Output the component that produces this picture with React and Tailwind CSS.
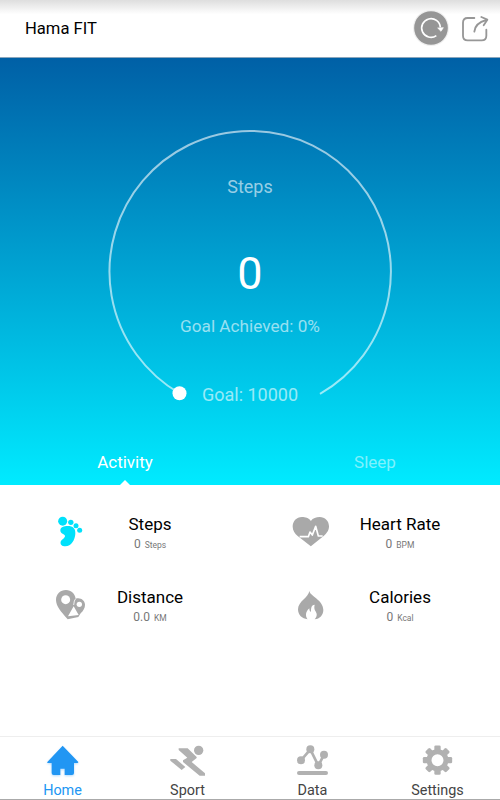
import React, { useState } from 'react';
import clsx from 'clsx';

const RefreshIcon = () => (
  <svg className="h-9 w-9" viewBox="0 0 108 108" fill="none">
    <circle cx="54" cy="54" r="54" fill="#efefef" />
    <circle cx="54" cy="54" r="50.5" fill="#969696" />
    <path d="M70 77 A28 28 0 1 1 82 52" stroke="#fff" strokeWidth="5" />
    <path d="M74 54 L91 53 L84 64 Z" fill="#fff" stroke="#fff" strokeWidth="2" />
  </svg>
);

const ShareIcon = () => (
  <svg
    className="h-7 w-7"
    viewBox="0 0 84 84"
    fill="none"
    stroke="#979797"
    strokeWidth="5.500"
    strokeLinecap="round"
    strokeLinejoin="round"
  >
    <path d="M40 9 H20 Q6 9 6 23 V62 Q6 76 20 76 H62 Q76 76 76 62 V44" />
    <path d="M40 50 C41 34 51 22 76 15" />
    <path d="M61 6 L79 14 L68 31" />
  </svg>
);

const FootIcon = () => (
  <svg className="mr-0.5 h-[31px] w-7" viewBox="0 0 84 93" fill="#00e1fb">
    <circle cx="23" cy="15.500" r="13.500" />
    <circle cx="47.500" cy="19" r="8" />
    <circle cx="63" cy="29" r="7.500" />
    <circle cx="74" cy="43" r="7.500" />
    <path d="M16 43 C16 33 27 30 38 30 C54 30 62 38 61 53 C60 71 49 91 31 91 C21 91 15 85 17 77 C19 71 30 67 30 60 C30 54 16 54 16 43 Z" />
  </svg>
);

const HeartIcon = () => (
  <svg className="h-[31px] w-[37px]" viewBox="0 0 111 93" fill="none">
    <path
      d="M56.500 15 C50 5 40 3 30 3 C13 3 2 16 2 32 C2 44 9 53 17 60 L56.500 91 L95 60 C104 52 111 44 111 31 C111 15 99 3 83 3 C72 3 63 6 56.500 15 Z"
      fill="#a9a9a9"
    />
    <path d="M23 62 H49 L54 48 L61 57 L71 31 L79 60 H92" stroke="#fff" strokeWidth="5" strokeLinejoin="round" />
  </svg>
);

const PinsIcon = () => (
  <svg className="h-[31px] w-[31px]" viewBox="0 0 93 93">
    <path
      fill="#a9a9a9"
      d="M33 3 C49 3 60 14 62 29 C76 24 90 34 90 47 C90 57 85 65 77 73 L70 84 L38 91 L34 86 C20 70 3 52 3 33 C3 15 16 3 33 3 Z"
    />
    <circle cx="32" cy="32" r="13.500" fill="#fff" />
    <circle cx="73" cy="46" r="8" fill="#fff" />
    <path d="M56 52 L71 78 L52 80 L39 82 Z" fill="#fff" />
    <path d="M62 29 L58 36 L56 48" fill="none" stroke="#fff" strokeWidth="2.500" />
  </svg>
);

const FlameIcon = () => (
  <svg className="h-[30px] w-[27px]" viewBox="0 0 81 90" fill="#a9a9a9">
    <path d="M37 2 C38 18 79 29 79 60 C79 75 68 87 53 88 C63 77 59 69 55 63 C52 58 51 52 53 44 C42 45 42 56 42 66 C38 64 37 60 37 55 C30 61 27 68 27 74 C27 80 29 84 32 88 C15 86 3 75 3 58 C3 33 36 22 37 2 Z" />
  </svg>
);

const HomeIcon = () => (
  <svg className="h-[33px] w-[33px] drop-shadow-[0_1px_1px_rgba(33,150,243,0.35)]" viewBox="0 0 99 99" fill="#2196f3">
    <path d="M50 5 L97 54 Q97 57 94 57 H84 V87 Q84 93 78 93 H56 V74 H43 V93 H23 Q17 93 17 87 V57 H6 Q3 57 4 54 Z" />
  </svg>
);

const SportIcon = () => (
  <svg className="h-[33px] w-[37px]" viewBox="0 0 111 99" fill="#b1b1b1">
    <circle cx="89" cy="19" r="14" />
    <path d="M29 13 H56 L83 39 V42 L68 54 L108 88 V95 H92 L42 54 V49 L55 41 L29 18 Z" />
    <path d="M4 45 H21 L49 69 L38 78 L4 50 Z" />
  </svg>
);

const DataIcon = () => (
  <svg className="h-[33px] w-[33px]" viewBox="0 0 99 99" fill="#b1b1b1">
    <path d="M15 49 L43 16 L67 65 L84 32" fill="none" stroke="#b1b1b1" strokeWidth="8" />
    <circle cx="15" cy="49" r="12" />
    <circle cx="43" cy="16" r="12" />
    <circle cx="67" cy="64" r="12" />
    <circle cx="84" cy="32" r="12" />
    <rect x="3" y="81" width="93" height="12" rx="6" />
  </svg>
);

const GEAR_TEETH = [0, 45, 90, 135, 180, 225, 270, 315];

const SettingsIcon = () => (
  <svg className="h-[33px] w-[33px]" viewBox="-49.500 -48.500 99 99" fill="#b1b1b1">
    <circle r="25.500" fill="none" stroke="#b1b1b1" strokeWidth="15" />
    {GEAR_TEETH.map((angle) => (
      <rect key={angle} x="-9.500" y="-44" width="19" height="18" rx="4" transform={`rotate(${angle})`} />
    ))}
  </svg>
);

const METRICS = [
  { label: 'Steps', value: '0', unit: 'Steps', Icon: FootIcon },
  { label: 'Heart Rate', value: '0', unit: 'BPM', Icon: HeartIcon },
  { label: 'Distance', value: '0.0', unit: 'KM', Icon: PinsIcon },
  { label: 'Calories', value: '0', unit: 'Kcal', Icon: FlameIcon },
];

const NAV_ITEMS = [
  { label: 'Home', Icon: HomeIcon },
  { label: 'Sport', Icon: SportIcon },
  { label: 'Data', Icon: DataIcon },
  { label: 'Settings', Icon: SettingsIcon },
];

const Header = () => (
  <header className="flex h-[58px] shrink-0 items-center border-b border-[#8ba6bc] bg-linear-to-b from-[#dedede] via-white via-25% to-white pr-[11px] pl-[25px]">
    <h1 className="flex-1 pt-px text-[16.6px] text-black">Hama FIT</h1>
    <button className="mr-3 pb-px" aria-label="Refresh">
      <RefreshIcon />
    </button>
    <button aria-label="Share">
      <ShareIcon />
    </button>
  </header>
);

const GoalDial = () => (
  <div className="grid h-[377px] justify-center pt-[67px]">
    <svg className="col-start-1 row-start-1 h-[290px] w-[290px]" viewBox="0 0 290 290" fill="none">
      <path d="M74.500 268.300 A140.700 140.700 0 1 1 215 268.800" stroke="#fff" strokeOpacity="0.6" strokeWidth="2" />
      <circle cx="74.500" cy="268.300" r="7" fill="#fff" />
    </svg>
    <div className="col-start-1 row-start-1 flex flex-col items-center text-white/60">
      <p className="mt-[50px] text-[18px] leading-6">Steps</p>
      <p className="mt-[49px] text-[45px] leading-[52px] text-white">0</p>
      <p className="mt-3.5 text-[17.2px] leading-6">Goal Achieved: 0%</p>
      <p className="mt-[45px] text-[18px] leading-6">Goal: 10000</p>
    </div>
  </div>
);

const Tabs = ({ active, onChange }) => (
  <div className="grid h-[50px] grid-cols-2">
    {['Activity', 'Sleep'].map((tab) => (
      <button
        key={tab}
        onClick={() => onChange(tab)}
        className={clsx(
          'flex flex-col items-center justify-between pt-[15px] text-[17px] leading-6',
          active === tab ? 'text-white' : 'text-white/50'
        )}
      >
        {tab}
        {active === tab && (
          <span className="h-[5px] w-2.5 bg-white [clip-path:polygon(50%_0,100%_100%,0_100%)]" />
        )}
      </button>
    ))}
  </div>
);

const Metric = ({ label, value, unit, Icon }) => (
  <div className="group flex h-[73px] pl-[50px] even:pl-10">
    <div className="flex h-[69px] w-10 shrink-0 items-center justify-center">
      <Icon />
    </div>
    <div className="flex w-[120px] flex-col items-center pt-[15px] group-even:w-[140px]">
      <p className="text-[17px] leading-6 text-black">{label}</p>
      <p className="flex items-baseline gap-1 text-xs leading-4 text-[#777]">
        {value}
        <span className="text-[8.5px]">{unit}</span>
      </p>
    </div>
  </div>
);

const BottomNav = ({ active, onChange }) => (
  <nav className="grid h-16 shrink-0 grid-cols-4 border-t border-b border-t-[#eee] border-b-[#aaa]">
    {NAV_ITEMS.map(({ label, Icon }) => (
      <button
        key={label}
        onClick={() => onChange(label)}
        className={clsx(
          'flex flex-col items-center pt-[7px] text-[14.4px] leading-5',
          active === label ? 'text-[#2196f3]' : 'text-[#444]'
        )}
      >
        <Icon />
        <span className="mt-1">{label}</span>
      </button>
    ))}
  </nav>
);

export default function App() {
  const [tab, setTab] = useState('Activity');
  const [page, setPage] = useState('Home');

  return (
    <div className="flex h-[800px] w-[500px] flex-col overflow-hidden bg-white font-[Roboto,sans-serif]">
      <Header />
      <section className="h-[427px] shrink-0 bg-linear-to-b from-[#0060a6] to-[#00ebff]">
        <GoalDial />
        <Tabs active={tab} onChange={setTab} />
      </section>
      <main className="grid flex-1 grid-cols-2 content-start pt-3">
        {METRICS.map((metric) => (
          <Metric key={metric.label} {...metric} />
        ))}
      </main>
      <BottomNav active={page} onChange={setPage} />
    </div>
  );
}
